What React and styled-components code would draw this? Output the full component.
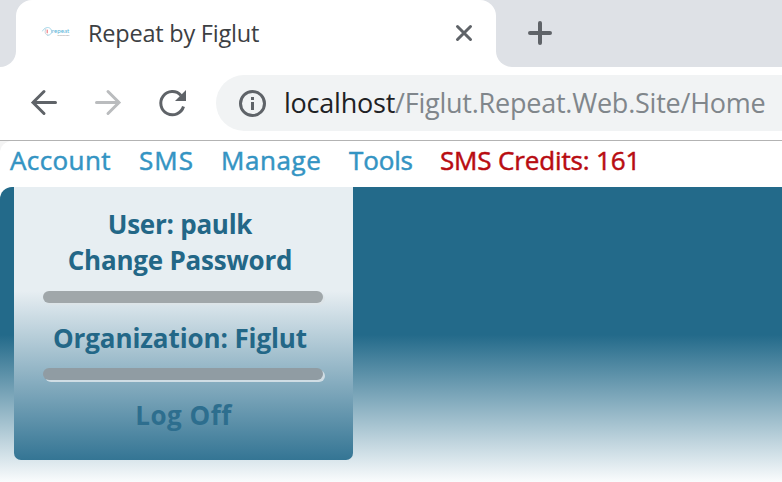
import React from "react";
import styled, { createGlobalStyle } from "styled-components";

const GlobalStyle = createGlobalStyle`
  * { box-sizing: border-box; }
  body { margin: 0; background: #fff; overflow: hidden; font-family: "Segoe UI", "Open Sans", "Noto Sans", sans-serif; }
`;

const Window = styled.div`
  width: 782px;
  height: 482px;
  display: flex;
  flex-direction: column;
  overflow: hidden;
  background: #fff;
`;

const TabStrip = styled.header`
  display: grid;
  grid-template-columns: 16px 480px 1fr;
  height: 67px;
  background: #fff;
`;

const StripEdge = styled.div`
  background: #dee1e6;
  border-bottom-right-radius: 16px;
`;

const TabHolder = styled.div`
  background: #dee1e6;
`;

const Tab = styled.div`
  height: 67px;
  display: flex;
  align-items: flex-start;
  background: #fff;
  border-radius: 16px 16px 0 0;
  padding-left: 26px;
`;

const TabTitle = styled.span`
  margin: 16px 0 0 18px;
  width: 367px;
  height: 34px;
  line-height: 34px;
  font-size: 23.5px;
  letter-spacing: ${(p) => p.$spacing}px;
  color: #3c4043;
  white-space: nowrap;
`;

const StripRest = styled.div`
  background: #dee1e6;
  border-bottom-left-radius: 16px;
  padding: 20px 0 0 31px;
`;

const Icon = styled.svg`
  display: block;
  flex: none;
  overflow: visible;
  fill: none;
  stroke: ${(p) => p.$color || "#5f6368"};
  stroke-width: ${(p) => p.$weight || 3};
  stroke-linecap: ${(p) => p.$cap || "round"};
`;

const CloseIcon = styled(Icon)`
  margin-top: 24px;
`;

const Favicon = styled(Icon)`
  margin-top: 24px;
`;

const LogoText = styled.text`
  font-family: Lato, sans-serif;
  font-size: ${(p) => p.$size}px;
  fill: ${(p) => p.$fill};
  stroke: none;
`;

const Toolbar = styled.nav`
  height: 73px;
  flex: none;
  display: flex;
  align-items: flex-start;
  padding: 8px 0 0 30px;
`;

const NavIcons = styled.div`
  display: flex;
  height: 56px;
  width: 186px;
  gap: 36px;
  align-items: center;
`;

const AddressBar = styled.div`
  flex: 1;
  height: 56px;
  display: flex;
  align-items: center;
  border-radius: 28px 0 0 28px;
  background: #f1f3f4;
  padding-left: 23px;
`;

const Url = styled.span`
  margin-left: 18px;
  height: 38px;
  line-height: 38px;
  font-size: 27px;
  letter-spacing: ${(p) => p.$spacing}px;
  color: #80868b;
  white-space: nowrap;
`;

const Host = styled.span`
  color: #202124;
`;

const Page = styled.main`
  flex: 1;
  display: flex;
  flex-direction: column;
  border-top: 1px solid #b3b3b3;
  background: #f4f4f4;
`;

const MenuBar = styled.nav`
  display: flex;
  flex: none;
  height: 46px;
  padding-left: 10px;
  background: #fff;
  border-top-left-radius: 12px;
`;

const MenuItem = styled.a`
  width: ${(p) => p.$width}px;
  flex: none;
  height: 38px;
  line-height: 38px;
  font-size: 26px;
  letter-spacing: ${(p) => p.$spacing || 0}px;
  color: ${(p) => (p.$alert ? "#b80c11" : "#3494c3")};
  -webkit-text-stroke: 0.5px currentColor;
  white-space: nowrap;
`;

const ContentBase = styled.div`
  flex: 1;
  background: #fff;
`;

const Content = styled.section`
  height: 295px;
  padding-left: 14px;
  border-top-left-radius: 12px;
  background: linear-gradient(#236a8a 0, #236a8a 148px, #fafcfd 295px);
`;

const Panel = styled.aside`
  width: 339px;
  height: 273px;
  display: flex;
  flex-direction: column;
  align-items: center;
  padding-top: 19px;
  border-radius: 0 0 7px 7px;
  background: linear-gradient(#e7eef2 0, #e7eef2 104px, #347594 273px);
`;

const PanelText = styled.div`
  height: 36px;
  line-height: 36px;
  padding-right: ${(p) => p.$shift || 0}px;
  font-size: 26px;
  font-weight: 700;
  letter-spacing: ${(p) => p.$spacing || 0}px;
  color: ${(p) => (p.$dim ? "#2d6e8e" : "#236787")};
  white-space: nowrap;
`;

const Divider = styled.hr`
  width: 280px;
  height: 12px;
  flex: none;
  margin: ${(p) => p.$margin};
  border: 0;
  border-radius: 6px;
  background: ${(p) => p.$color};
  box-shadow: 2px 2px 0 ${(p) => p.$edge};
`;

function Logo() {
  return (
    <Favicon width="28" height="16" viewBox="0 0 28 16" $weight={0.8}>
      <path d="M.5 7C2 4 6 2.2 8.5 4.7c2.6 3 .5 7-3 6.5" stroke="#8fcce2" />
      <path d="M3.8 5.2C2.3 8 3.2 11 6 11.2" stroke="#b9c8d2" />
      <path d="M5.2 6v2.8" stroke="#ef7277" strokeWidth="1.1" />
      <LogoText x="9.8" y="8.8" $size={6.4} $fill="#58b4d8" textLength="17.4" lengthAdjust="spacingAndGlyphs">repeat</LogoText>
      <LogoText x="15.5" y="11.8" $size={2.5} $fill="#999" textLength="12">technology</LogoText>
    </Favicon>
  );
}

export default function App() {
  return (
    <>
      <GlobalStyle />
      <Window>
        <TabStrip>
          <StripEdge />
          <TabHolder>
            <Tab>
              <Logo />
              <TabTitle $spacing={-0.22}>Repeat by Figlut</TabTitle>
              <CloseIcon width="18" height="18" viewBox="0 0 18 18">
                <path d="M2.5 2.5l13 13M15.5 2.5l-13 13" />
              </CloseIcon>
            </Tab>
          </TabHolder>
          <StripRest>
            <Icon width="26" height="26" viewBox="0 0 26 26" $weight={4}>
              <path d="M13 3v20M3 13h20" />
            </Icon>
          </StripRest>
        </TabStrip>
        <Toolbar>
          <NavIcons>
            <Icon width="28" height="28" viewBox="0 0 28 28">
              <path d="M25.5 13.5H3M14 2.5L3 13.5l11 11" />
            </Icon>
            <Icon width="28" height="28" viewBox="0 0 28 28" $color="#babcbe">
              <path d="M2.5 13.5H25M14 2.5l11 11-11 11" />
            </Icon>
            <Icon width="28" height="28" viewBox="0 0 28 28" $cap="butt">
              <path d="M25.5 17.5A11.6 11.6 0 1 1 23 6.4" />
              <path d="M28 1v11H17z" fill="#5f6368" stroke="none" />
            </Icon>
          </NavIcons>
          <AddressBar>
            <Icon width="27" height="28" viewBox="0 0 27 28" $cap="butt">
              <circle cx="13.5" cy="14.5" r="12" />
              <path d="M13.5 8v3M13.5 13v8" />
            </Icon>
            <Url $spacing={-0.23}>
              <Host>localhost</Host>/Figlut.Repeat.Web.Site/Home
            </Url>
          </AddressBar>
        </Toolbar>
        <Page>
          <MenuBar>
            <MenuItem $width={129} $spacing={0.4}>Account</MenuItem>
            <MenuItem $width={82} $spacing={1}>SMS</MenuItem>
            <MenuItem $width={128} $spacing={0.6}>Manage</MenuItem>
            <MenuItem $width={91} $spacing={-0.15}>Tools</MenuItem>
            <MenuItem $width={210} $spacing={-0.15} $alert>SMS Credits: 161</MenuItem>
          </MenuBar>
          <ContentBase>
            <Content>
              <Panel>
                <PanelText $shift={7} $spacing={-0.25}>User: paulk</PanelText>
                <PanelText $shift={7} $spacing={-0.22}>Change Password</PanelText>
                <Divider $margin="13px 2px 17px 0" $color="#a0a7aa" $edge="#dce4e8" />
                <PanelText $shift={7} $spacing={-0.1}>Organization: Figlut</PanelText>
                <Divider $margin="12px 2px 17px 0" $color="#909ca3" $edge="#d0dde4" />
                <PanelText $dim $spacing={0.5}>Log Off</PanelText>
              </Panel>
            </Content>
          </ContentBase>
        </Page>
      </Window>
    </>
  );
}
